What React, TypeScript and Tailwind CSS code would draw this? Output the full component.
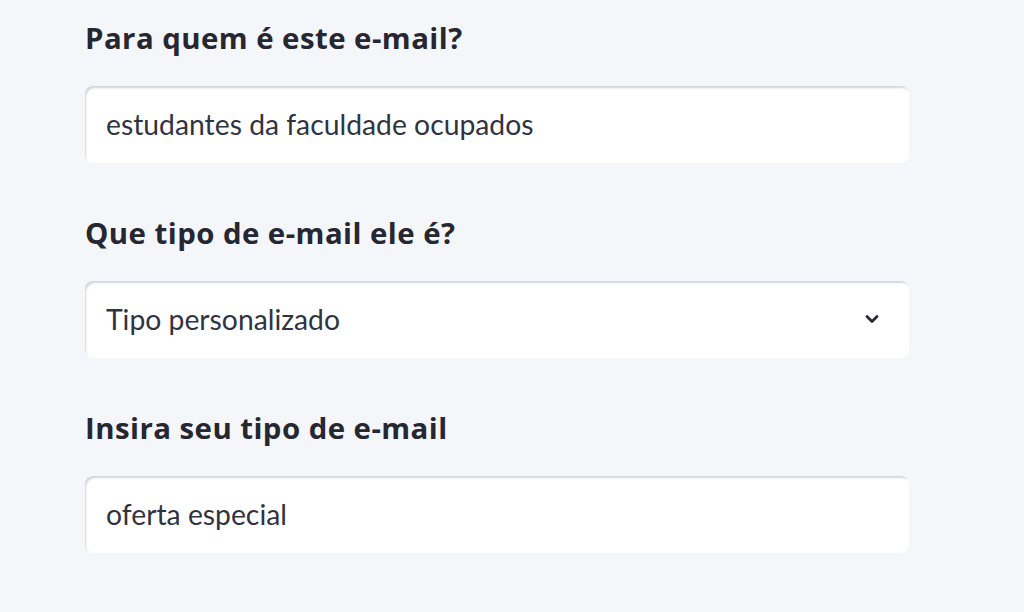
import React from 'react';

function Label({ children }: { children: React.ReactNode }) {
    return (
        <p
            className="text-[29.4px] font-bold leading-[40px] tracking-[0.45px] text-[#262730]"
            style={{ fontFamily: '"Open Sans", "Noto Sans", sans-serif' }}
        >
            {children}
        </p>
    );
}

function Field({ value, select }: { value: string; select?: boolean }) {
    return (
        <div className="mt-[28px] h-[77px] rounded-lg bg-white shadow-[inset_2px_3px_2px_-1px_#d3d5dc] flex items-center justify-between pl-[21px] pr-[30px]">
            <span
                className="text-[28.3px] text-[#31333f]"
                style={{ fontFamily: 'Lato, "Noto Sans", sans-serif' }}
            >
                {value}
            </span>
            {select && (
                <svg width="14" height="10" viewBox="0 0 14 10" className="mt-[-2px]">
                    <path d="M2 2.5 L7 7.5 L12 2.5" fill="none" stroke="#262730" strokeWidth="2.8" strokeLinecap="round" strokeLinejoin="round" />
                </svg>
            )}
        </div>
    );
}

export default function App() {
    return (
        <div className="w-[1024px] h-[612px] bg-[#f4f6fa] overflow-hidden">
            <div className="w-[824px] ml-[85px] pt-[18px] flex flex-col gap-[50px]">
                <div>
                    <Label>Para quem é este e-mail?</Label>
                    <Field value="estudantes da faculdade ocupados" />
                </div>
                <div>
                    <Label>Que tipo de e-mail ele é?</Label>
                    <Field value="Tipo personalizado" select />
                </div>
                <div>
                    <Label>Insira seu tipo de e-mail</Label>
                    <Field value="oferta especial" />
                </div>
            </div>
        </div>
    );
}
